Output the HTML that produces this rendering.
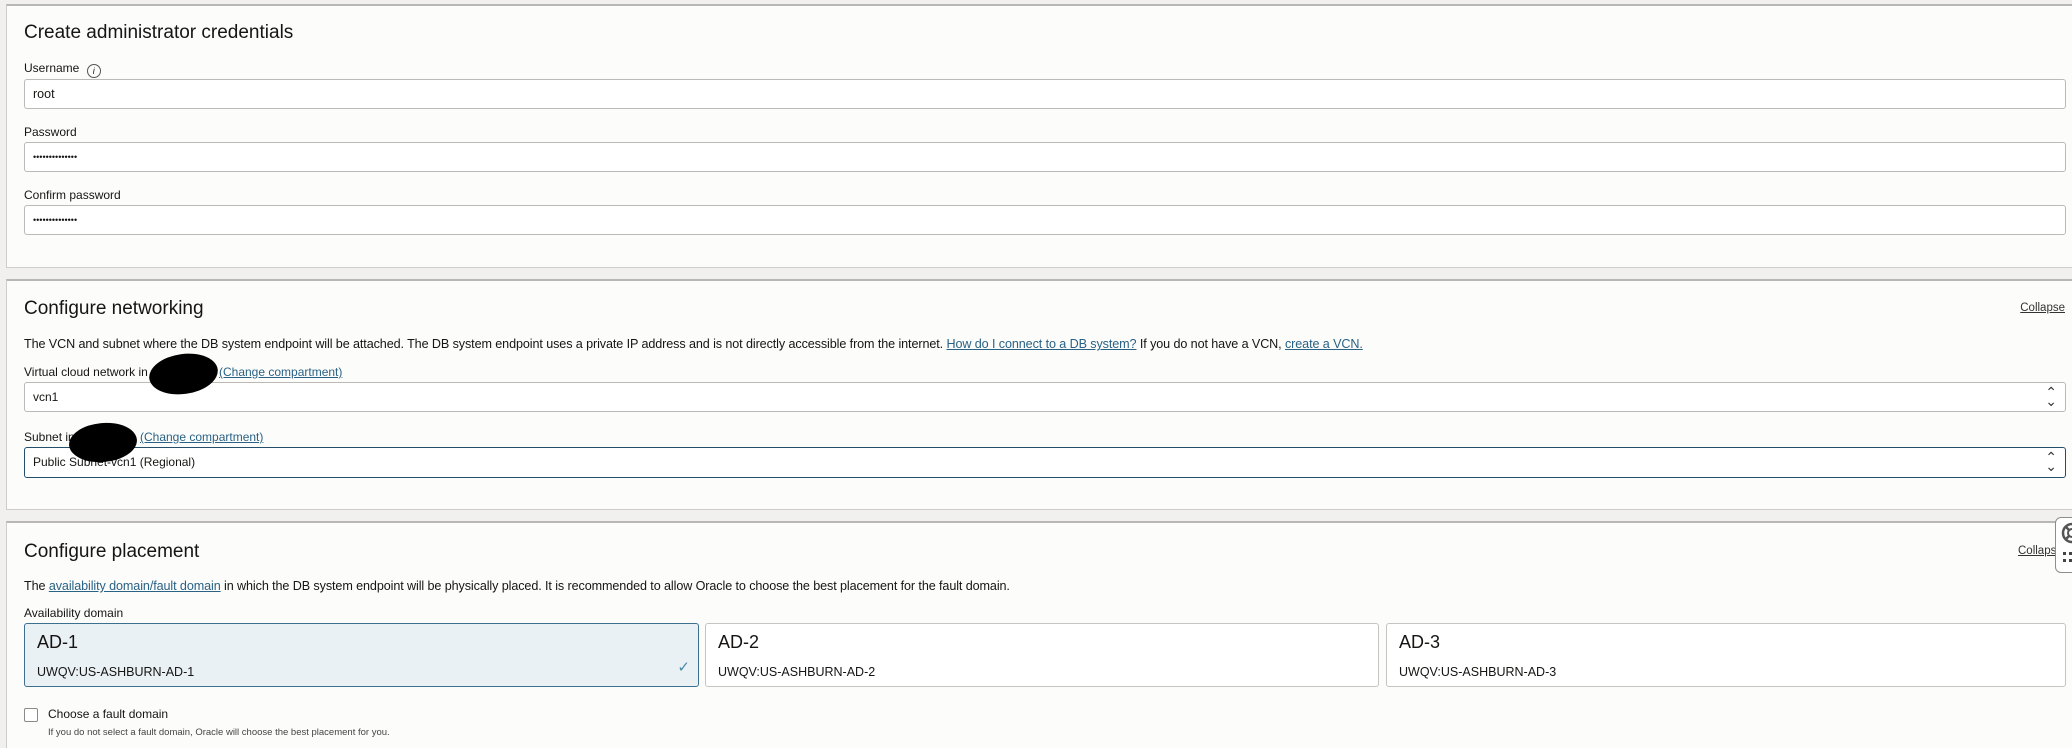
<!DOCTYPE html>
<html style="width:2072px;height:748px;overflow:hidden"><head><meta charset="utf-8"><style>
*{box-sizing:border-box;margin:0;padding:0}
body{width:2072px;height:748px;overflow:hidden;background:#f1f0ee;font-family:"Liberation Sans",Arial,sans-serif;color:#161513;position:relative}
.p{position:absolute;left:6px;width:2080px;background:#fcfcfb;border:1px solid #cfcdca;border-top:2px solid #b9b7b3}
.a{position:absolute;white-space:nowrap}
.t{font-size:19px;left:24px}
.l{font-size:12px;left:24px}
.in{position:absolute;left:24px;width:2042px;height:30px;background:#fff;border:1px solid #bcbab6;border-radius:3px;font-size:12.5px;padding-left:8px;line-height:28px}
.pw{font-size:9px;letter-spacing:0}
a,.lk{color:#2a6285;text-decoration:underline}
.c{position:absolute;top:623px;height:64px;background:#fff;border:1px solid #c6c4c0;border-radius:3px}
.c .h{position:absolute;left:12px;top:8px;font-size:18px}
.c .s{position:absolute;left:12px;top:41px;font-size:12.5px}
.blob{position:absolute;background:#000;border-radius:50%}
.arr{position:absolute;right:8px;top:5px;font-size:14px;line-height:9px;color:#333}
</style></head><body>
<div class="p" style="top:4px;height:264px"></div>
<div class="a t" style="top:22px">Create administrator credentials</div>
<div class="a l" style="top:61px">Username <span style="display:inline-block;width:14px;height:14px;border:1px solid #555;border-radius:50%;font-size:9px;text-align:center;line-height:12px;vertical-align:-2px;margin-left:4px;font-style:italic">i</span></div>
<div class="in" style="top:79px">root</div>
<div class="a l" style="top:125px">Password</div>
<div class="in pw" style="top:142px">••••••••••••••</div>
<div class="a l" style="top:188px">Confirm password</div>
<div class="in pw" style="top:205px">••••••••••••••</div>

<div class="p" style="top:279px;height:231px"></div>
<div class="a t" style="top:298px">Configure networking</div>
<div class="a" style="right:7px;top:302px;font-size:11.5px;color:#333;text-decoration:underline">Collapse</div>
<div class="a" style="left:24px;top:337px;font-size:12.6px;letter-spacing:-0.1px">The VCN and subnet where the DB system endpoint will be attached. The DB system endpoint uses a private IP address and is not directly accessible from the internet. <span class="lk">How do I connect to a DB system?</span> If you do not have a VCN, <span class="lk">create a VCN.</span></div>
<div class="a l" style="top:365px">Virtual cloud network in</div>
<div class="a lk" style="left:219px;top:365px;font-size:12px">(Change compartment)</div>
<div class="in" style="top:382px;font-size:12px">vcn1<span class="arr">⌃<br>⌄</span></div>
<div class="a l" style="top:430px">Subnet in</div>
<div class="a lk" style="left:140px;top:430px;font-size:12px">(Change compartment)</div>
<div class="in" style="top:447px;height:31px;border:1.5px solid #244f6c;font-size:12px">Public Subnet-vcn1 (Regional)<span class="arr">⌃<br>⌄</span></div>
<div class="blob" style="left:149px;top:354px;width:69px;height:40px;transform:rotate(-8deg)"></div>
<div class="blob" style="left:69px;top:423px;width:68px;height:39px;transform:rotate(-5deg)"></div>

<div class="p" style="top:521px;height:227px;border-bottom:none"></div>
<div class="a t" style="top:541px">Configure placement</div>
<div class="a" style="left:2018px;top:545px;font-size:11.5px;color:#333;text-decoration:underline">Collapse</div>
<div class="a" style="left:24px;top:579px;font-size:12.6px;letter-spacing:-0.1px">The <span class="lk">availability domain/fault domain</span> in which the DB system endpoint will be physically placed. It is recommended to allow Oracle to choose the best placement for the fault domain.</div>
<div class="a l" style="top:606px">Availability domain</div>
<div class="c" style="left:24px;width:675px;background:#eaf1f5;border-color:#3d6f8e"><div class="h">AD-1</div><div class="s">UWQV:US-ASHBURN-AD-1</div><div class="a" style="right:8px;top:34px;color:#4a8aa8;font-size:15px">✓</div></div>
<div class="c" style="left:705px;width:674px"><div class="h">AD-2</div><div class="s">UWQV:US-ASHBURN-AD-2</div></div>
<div class="c" style="left:1386px;width:680px"><div class="h">AD-3</div><div class="s">UWQV:US-ASHBURN-AD-3</div></div>
<div class="a" style="left:24px;top:708px;width:14px;height:14px;border:1px solid #8c8a86;border-radius:2px;background:#fff"></div>
<div class="a" style="left:48px;top:707px;font-size:12px">Choose a fault domain</div>
<div class="a" style="left:48px;top:727px;font-size:9.5px;color:#444">If you do not select a fault domain, Oracle will choose the best placement for you.</div>

<div class="a" style="left:2055px;top:517px;width:30px;height:56px;background:#fff;border:1px solid #8f8d89;border-radius:6px 0 0 6px">
<svg width="24" height="50" style="position:absolute;left:4px;top:4px"><circle cx="12" cy="11" r="9" fill="none" stroke="#555" stroke-width="2.5"/><circle cx="12" cy="11" r="4" fill="none" stroke="#555" stroke-width="2"/><path d="M6 5l3 3M18 5l-3 3M6 17l3-3M18 17l-3-3" stroke="#555" stroke-width="2.5"/><g fill="#444"><rect x="3" y="30" width="3" height="3"/><rect x="9" y="30" width="3" height="3"/><rect x="3" y="37" width="3" height="3"/><rect x="9" y="37" width="3" height="3"/></g></svg>
</div>
</body></html>
